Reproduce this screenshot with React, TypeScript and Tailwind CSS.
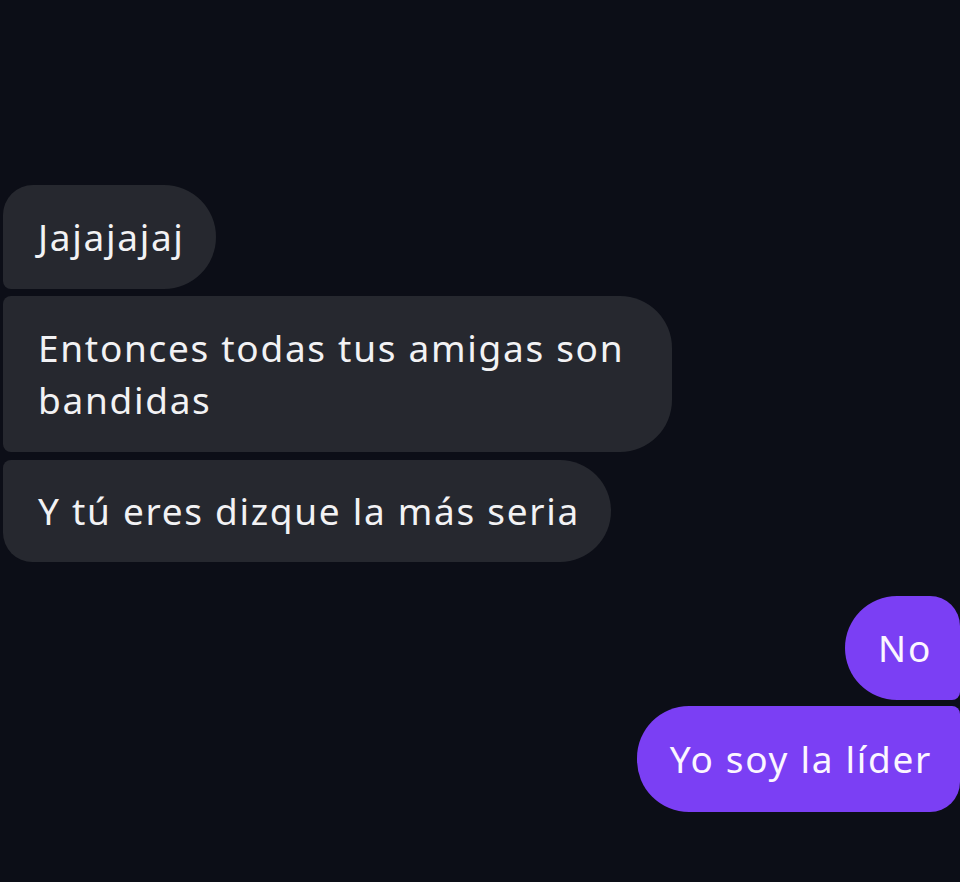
import React from "react";

const Left = ({ children, className }: { children: React.ReactNode; className: string }) => (
  <div
    className={`self-start ml-[3px] bg-[#26282f] text-[#f2f2f4] text-[37px] leading-[52px] tracking-[1.7px] pl-[35px] pr-[31px] ${className}`}
  >
    {children}
  </div>
);

const Right = ({ children, className }: { children: React.ReactNode; className: string }) => (
  <div
    className={`self-end bg-[#7b3ff4] text-[#fbf6ff] text-[37px] leading-[52px] tracking-[1.7px] pl-[33px] pr-[28px] ${className}`}
  >
    {children}
  </div>
);

const App = () => {
  return (
    <div
      className="min-h-[882px] w-[960px] bg-[#0c0e17] flex flex-col pt-[185px] overflow-hidden"
      style={{ fontFamily: "'Noto Sans', sans-serif" }}
    >
      <Left className="py-[26px] rounded-tl-[30px] rounded-bl-[8px] rounded-r-[52px]">Jajajajaj</Left>
      <Left className="mt-[7px] py-[26px] w-[669px] rounded-l-[8px] rounded-r-[52px]">
        Entonces todas tus amigas son bandidas
      </Left>
      <Left className="mt-[8px] py-[25px] rounded-tl-[8px] rounded-bl-[30px] rounded-r-[52px]">
        Y tú eres dizque la más seria
      </Left>
      <Right className="mt-[34px] py-[26px] rounded-l-[52px] rounded-tr-[30px] rounded-br-[8px]">No</Right>
      <Right className="mt-[6px] py-[27px] rounded-l-[52px] rounded-tr-[8px] rounded-br-[30px]">
        Yo soy la líder
      </Right>
    </div>
  );
};

export default App;
